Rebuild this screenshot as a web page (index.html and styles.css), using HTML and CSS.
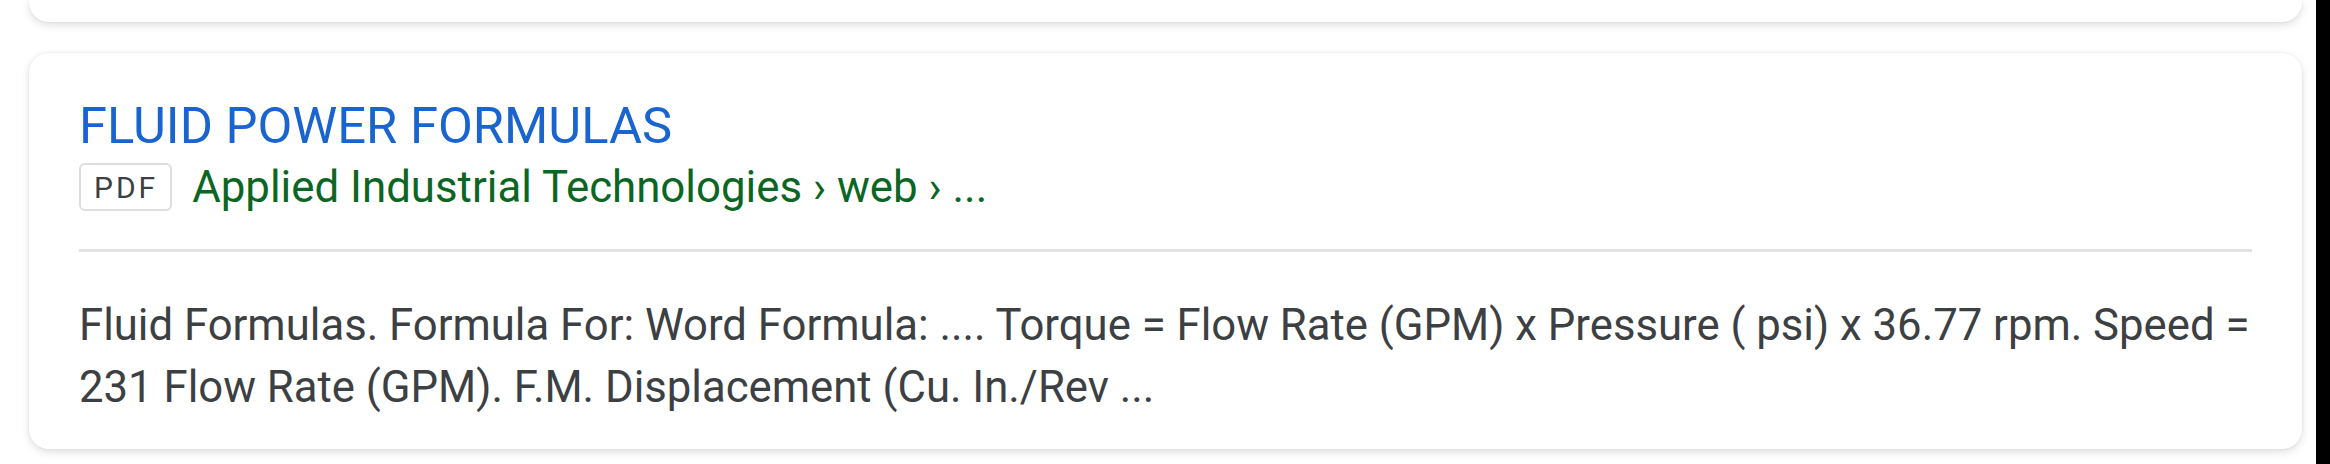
FILE: index.html
```html
<!DOCTYPE html>
<html>
<head>
  <title>Search result</title>
  <link rel="stylesheet" href="styles.css">
</head>
<body>
  <div class="screen">
    <main class="results">
      <div class="card card-prev"></div>

      <div class="card result">
        <a class="result-title" href="#">FLUID POWER FORMULAS</a>
        <div class="result-source">
          <span class="badge">PDF</span>
          <span class="crumbs">Applied Industrial Technologies › web › ...</span>
        </div>
        <hr class="divider">
        <p class="snippet">Fluid Formulas. Formula For: Word Formula: .... Torque = Flow Rate (GPM) x Pressure ( psi) x 36.77 rpm. Speed = 231 Flow Rate (GPM). F.M. Displacement (Cu. In./Rev ...</p>
      </div>
    </main>
    <div class="edge"></div>
  </div>
</body>
</html>
```

FILE: styles.css
```css
html, body {
  margin: 0;
  height: 100%;
}

body {
  font-family: Roboto, "Noto Sans", Arial, sans-serif;
  background-color: #ffffff;
  overflow: hidden;
}

.screen {
  display: flex;
  height: 100%;
}

.results {
  flex: 1;
  padding: 0 14px 0 29px;
}

.edge {
  width: 14px;
  background-color: #000000;
}

.card {
  background-color: #ffffff;
  border-radius: 20px;
  box-shadow: 0 3px 8px rgba(0, 0, 0, 0.13), 0 0 3px rgba(0, 0, 0, 0.06);
}

.card-prev {
  height: 22px;
  border-radius: 0 0 20px 20px;
  margin-bottom: 31px;
}

.result {
  padding: 43px 50px 31px 50px;
}

.result-title {
  display: block;
  font-size: 50.7px;
  line-height: 60px;
  color: #1a64cf;
  text-decoration: none;
}

.result-source {
  display: flex;
  align-items: center;
  gap: 20px;
  height: 62px;
}

.badge {
  display: flex;
  align-items: center;
  height: 48px;
  box-sizing: border-box;
  padding: 0 12px 0 13px;
  border: 2px solid #dcdee1;
  border-radius: 6px;
  font-size: 30px;
  letter-spacing: 3px;
  color: #3c4043;
}

.crumbs {
  font-size: 43.8px;
  line-height: 62px;
  color: #0b6623;
  white-space: nowrap;
}

.divider {
  border: none;
  height: 3px;
  background-color: #e2e3e6;
  margin: 31px 0 0 0;
}

.snippet {
  margin: 42px 0 0 0;
  font-size: 43.7px;
  line-height: 62px;
  color: #3c4043;
}
```
